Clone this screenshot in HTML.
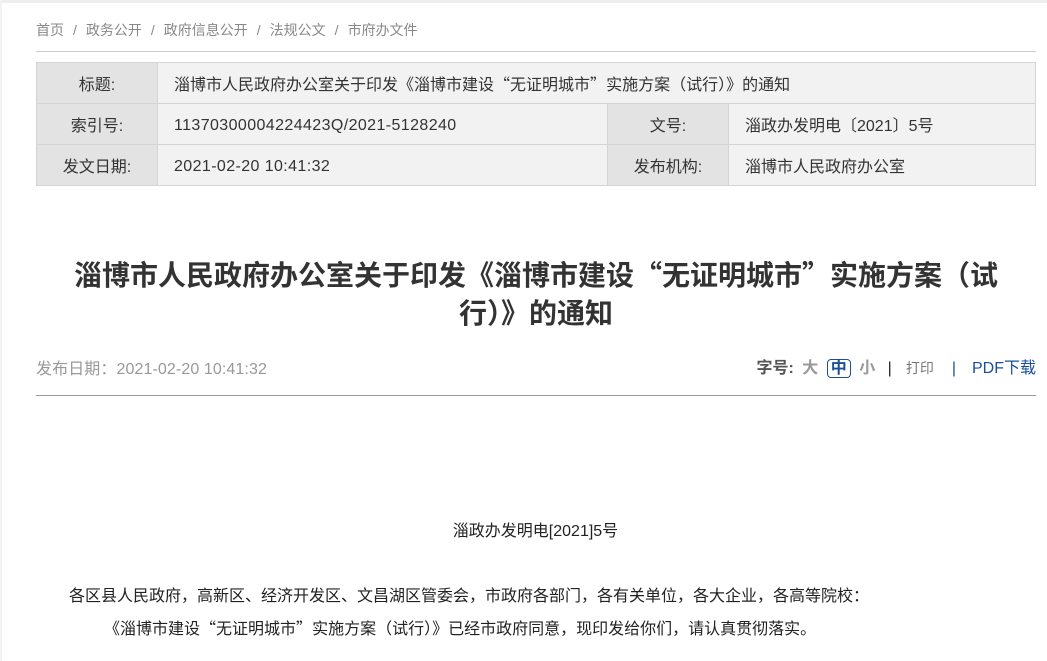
<!DOCTYPE html>
<html><head><meta charset="utf-8"><style>
*{margin:0;padding:0;box-sizing:border-box}
body{width:1047px;height:661px;overflow:hidden;background:#fff;font-family:"Liberation Sans","Noto Sans CJK SC",sans-serif;position:relative}
.a{position:absolute;white-space:nowrap}
.q{font-family:"Noto Sans CJK SC",sans-serif}
.top{left:0;top:0;width:1047px;height:3px;background:#eee}
.lft{left:0;top:0;width:2px;height:661px;background:#f3f3f3}
.bc{left:36px;top:20px;font-size:14px;color:#888}
.bc span{margin:0 9px}
.hr1{left:36px;top:51px;width:1000px;height:1px;background:#ccc}
table{position:absolute;left:36px;top:62px;width:1000px;border-collapse:collapse;font-size:16px;color:#333}
td{border:1px solid #d4d4d4;height:41px;background:#f2f2f2;padding-left:16px}
td.l{background:#e3e3e3;text-align:center;padding:0;width:121px}
.n{letter-spacing:0.4px;padding-top:3px}
h1{position:absolute;left:56px;width:960px;top:256px;text-align:center;font-size:28px;line-height:36px;font-weight:bold;color:#333}
.dt{left:36px;top:355px;font-size:16px;color:#999;letter-spacing:0.1px}
.tools{right:11px;top:354px;font-size:16px;color:#555}
.hr2{left:36px;top:395px;width:1000px;height:1px;background:#999}
.p{font-size:16px;color:#222}
</style></head><body>
<div class="a top"></div><div class="a lft"></div>
<div class="a bc">首页<span>/</span>政务公开<span>/</span>政府信息公开<span>/</span>法规公文<span>/</span>市府办文件</div>
<div class="a hr1"></div>
<table>
<tr><td class="l">标题:</td><td colspan="3">淄博市人民政府办公室关于印发《淄博市建设<span class="q">“</span>无证明城市<span class="q">”</span>实施方案（试行<span class="q">）》</span>的通知</td></tr>
<tr><td class="l">索引号:</td><td style="width:450px" class="n">11370300004224423Q/2021-5128240</td><td class="l">文号:</td><td>淄政办发明电〔2021〕5号</td></tr>
<tr><td class="l">发文日期:</td><td class="n">2021-02-20 10:41:32</td><td class="l">发布机构:</td><td>淄博市人民政府办公室</td></tr>
</table>
<h1>淄博市人民政府办公室关于印发《淄博市建设<span class="q">“</span>无证明城市<span class="q">”</span>实施方案（试行<span class="q">）》</span>的通知</h1>
<div class="a dt">发布日期：2021-02-20 10:41:32</div>
<div class="a tools"><b>字号:</b> <b style="color:#999;margin-left:4px">大</b> <b style="color:#1a4f9c;border:1px solid #1a4f9c;border-radius:4px;padding:0 3px;margin:0 4px">中</b> <b style="color:#999">小</b> <span style="color:#222;margin:0 14px 0 8px">|</span><span style="font-size:14px;color:#777">打印</span><span style="color:#1a4f9c;margin:0 16px 0 18px">|</span><span style="color:#1a4f9c">PDF下载</span></div>
<div class="a hr2"></div>
<div class="a p" style="left:0;width:1071px;text-align:center;top:517px">淄政办发明电[2021]5号</div>
<div class="a p" style="left:69px;top:582px">各区县人民政府，高新区、经济开发区、文昌湖区管委会，市政府各部门，各有关单位，各大企业，各高等院校：</div>
<div class="a p" style="left:104px;top:615px">《淄博市建设<span class="q">“</span>无证明城市<span class="q">”</span>实施方案（试行<span class="q">）》</span>已经市政府同意，现印发给你们，请认真贯彻落实。</div>
</body></html>
